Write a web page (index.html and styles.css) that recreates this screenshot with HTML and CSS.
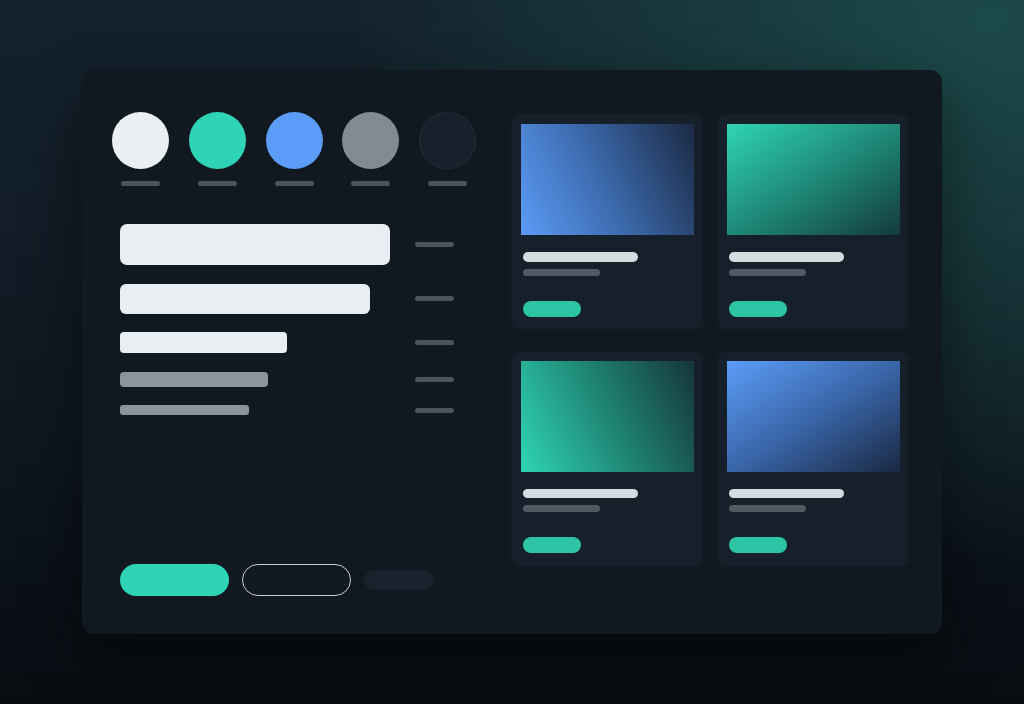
FILE: index.html
```html
<!DOCTYPE html>
<html lang="en">
<head>
<meta charset="utf-8">
<title>UI Kit Preview</title>
<link rel="stylesheet" href="styles.css">
</head>
<body>
<main class="panel">
  <section class="left">
    <div class="swatches">
      <div class="swatch"><span class="dot dot-white"></span><span class="tick"></span></div>
      <div class="swatch"><span class="dot dot-teal"></span><span class="tick"></span></div>
      <div class="swatch"><span class="dot dot-blue"></span><span class="tick"></span></div>
      <div class="swatch"><span class="dot dot-gray"></span><span class="tick"></span></div>
      <div class="swatch"><span class="dot dot-dark"></span><span class="tick"></span></div>
    </div>
    <div class="type-rows">
      <div class="type-row"><div class="bar-cell"><span class="bar bar-1"></span></div><span class="tick"></span></div>
      <div class="type-row"><div class="bar-cell"><span class="bar bar-2"></span></div><span class="tick"></span></div>
      <div class="type-row"><div class="bar-cell"><span class="bar bar-3"></span></div><span class="tick"></span></div>
      <div class="type-row"><div class="bar-cell"><span class="bar bar-4"></span></div><span class="tick"></span></div>
      <div class="type-row"><div class="bar-cell"><span class="bar bar-5"></span></div><span class="tick"></span></div>
    </div>
    <div class="buttons">
      <span class="btn btn-primary"></span>
      <span class="btn btn-outline"></span>
      <span class="btn btn-ghost"></span>
    </div>
  </section>
  <section class="cards">
    <article class="card"><div class="thumb thumb-blue-a"></div><span class="line-title"></span><span class="line-sub"></span><span class="card-btn"></span></article>
    <article class="card"><div class="thumb thumb-teal-a"></div><span class="line-title"></span><span class="line-sub"></span><span class="card-btn"></span></article>
    <article class="card"><div class="thumb thumb-teal-b"></div><span class="line-title"></span><span class="line-sub"></span><span class="card-btn"></span></article>
    <article class="card"><div class="thumb thumb-blue-b"></div><span class="line-title"></span><span class="line-sub"></span><span class="card-btn"></span></article>
  </section>
</main>
</body>
</html>
```
FILE: styles.css
```css
html, body {
  margin: 0;
  padding: 0;
}
body {
  width: 1024px;
  height: 704px;
  overflow: hidden;
  font-family: "Liberation Sans", Arial, sans-serif;
  background:
    radial-gradient(ellipse 640px 540px at 990px 20px, rgba(31, 90, 84, 0.72), rgba(31, 90, 84, 0) 100%),
    linear-gradient(180deg, #14222d 0%, #0f1821 55%, #080c11 100%);
  padding-top: 70px;
  box-sizing: border-box;
}
.panel {
  box-sizing: border-box;
  margin-left: 82px;
  width: 860px;
  height: 564px;
  background: #111820;
  border-radius: 12px;
  padding: 42px 34px 38px 30px;
  display: flex;
  gap: 36px;
  box-shadow: 0 24px 60px rgba(0, 0, 0, 0.45);
}
.left {
  width: 364px;
  display: flex;
  flex-direction: column;
}
.swatches {
  display: flex;
  gap: 19.75px;
}
.swatch {
  display: flex;
  flex-direction: column;
  align-items: center;
  width: 57px;
}
.dot {
  display: block;
  width: 57px;
  height: 57px;
  border-radius: 50%;
  box-sizing: border-box;
}
.dot-white { background: #e9eff3; }
.dot-teal { background: #2fd3b5; }
.dot-blue { background: #5b9cf8; }
.dot-gray { background: #808b93; }
.dot-dark { background: #18212b; border: 1px solid #232e38; }
.tick {
  display: block;
  width: 39px;
  height: 5px;
  border-radius: 3px;
  background: #4b545d;
}
.swatch .tick {
  margin-top: 12px;
}
.type-rows {
  margin-top: 38px;
  padding-left: 8px;
  display: flex;
  flex-direction: column;
  gap: 18.5px;
}
.type-row {
  display: flex;
  align-items: center;
}
.bar-cell {
  width: 295px;
  display: flex;
}
.bar {
  display: block;
  border-radius: 6px;
  background: #e8eef2;
}
.bar-1 { width: 270px; height: 41px; border-radius: 7px; }
.bar-2 { width: 250px; height: 30px; }
.bar-3 { width: 167px; height: 21px; border-radius: 4px; }
.bar-4 { width: 148px; height: 15px; background: #8e959a; border-radius: 4px; }
.bar-5 { width: 129px; height: 10px; background: #8e959a; border-radius: 3px; }
.buttons {
  margin-top: auto;
  padding-left: 8px;
  display: flex;
  align-items: center;
}
.btn {
  display: block;
  box-sizing: border-box;
}
.btn-primary {
  width: 109px;
  height: 32px;
  border-radius: 16px;
  background: #2fd3b5;
}
.btn-outline {
  width: 109px;
  height: 32px;
  border-radius: 16px;
  border: 1.5px solid #c5cbd0;
  margin-left: 12.5px;
}
.btn-ghost {
  width: 70px;
  height: 20px;
  border-radius: 10px;
  background: #18222d;
  margin-left: 13px;
}
.cards {
  margin-top: 3px;
  display: grid;
  grid-template-columns: 190px 190px;
  grid-auto-rows: 214px;
  column-gap: 16px;
  row-gap: 22.5px;
  align-content: start;
}
.card {
  box-sizing: border-box;
  background: #16202a;
  border-radius: 8px;
  padding: 9px 9px 12px 8.5px;
  display: flex;
  flex-direction: column;
  box-shadow: 0 0 6px rgba(25, 35, 45, 0.6);
}
.thumb {
  width: 173px;
  height: 111px;
}
.thumb-blue-a { background: linear-gradient(65deg, #5c9bf5 0%, #3d6cb0 45%, #1b2a44 100%); }
.thumb-teal-a { background: linear-gradient(to bottom right, #2fd5b3 0%, #1f8a79 50%, #143a3c 100%); }
.thumb-teal-b { background: linear-gradient(65deg, #2fd5b3 0%, #1f8575 50%, #163639 100%); }
.thumb-blue-b { background: linear-gradient(to bottom right, #5c9df7 0%, #3a66aa 50%, #1a2943 100%); }
.line-title {
  display: block;
  margin: 17px 0 0 2.5px;
  width: 115px;
  height: 9.5px;
  border-radius: 5px;
  background: #d3dde0;
}
.line-sub {
  display: block;
  margin: 7px 0 0 2.5px;
  width: 77px;
  height: 7px;
  border-radius: 4px;
  background: #505a63;
}
.card-btn {
  display: block;
  margin: 25px 0 0 2.5px;
  width: 58px;
  height: 16px;
  border-radius: 8px;
  background: #2cc4a5;
}
```
